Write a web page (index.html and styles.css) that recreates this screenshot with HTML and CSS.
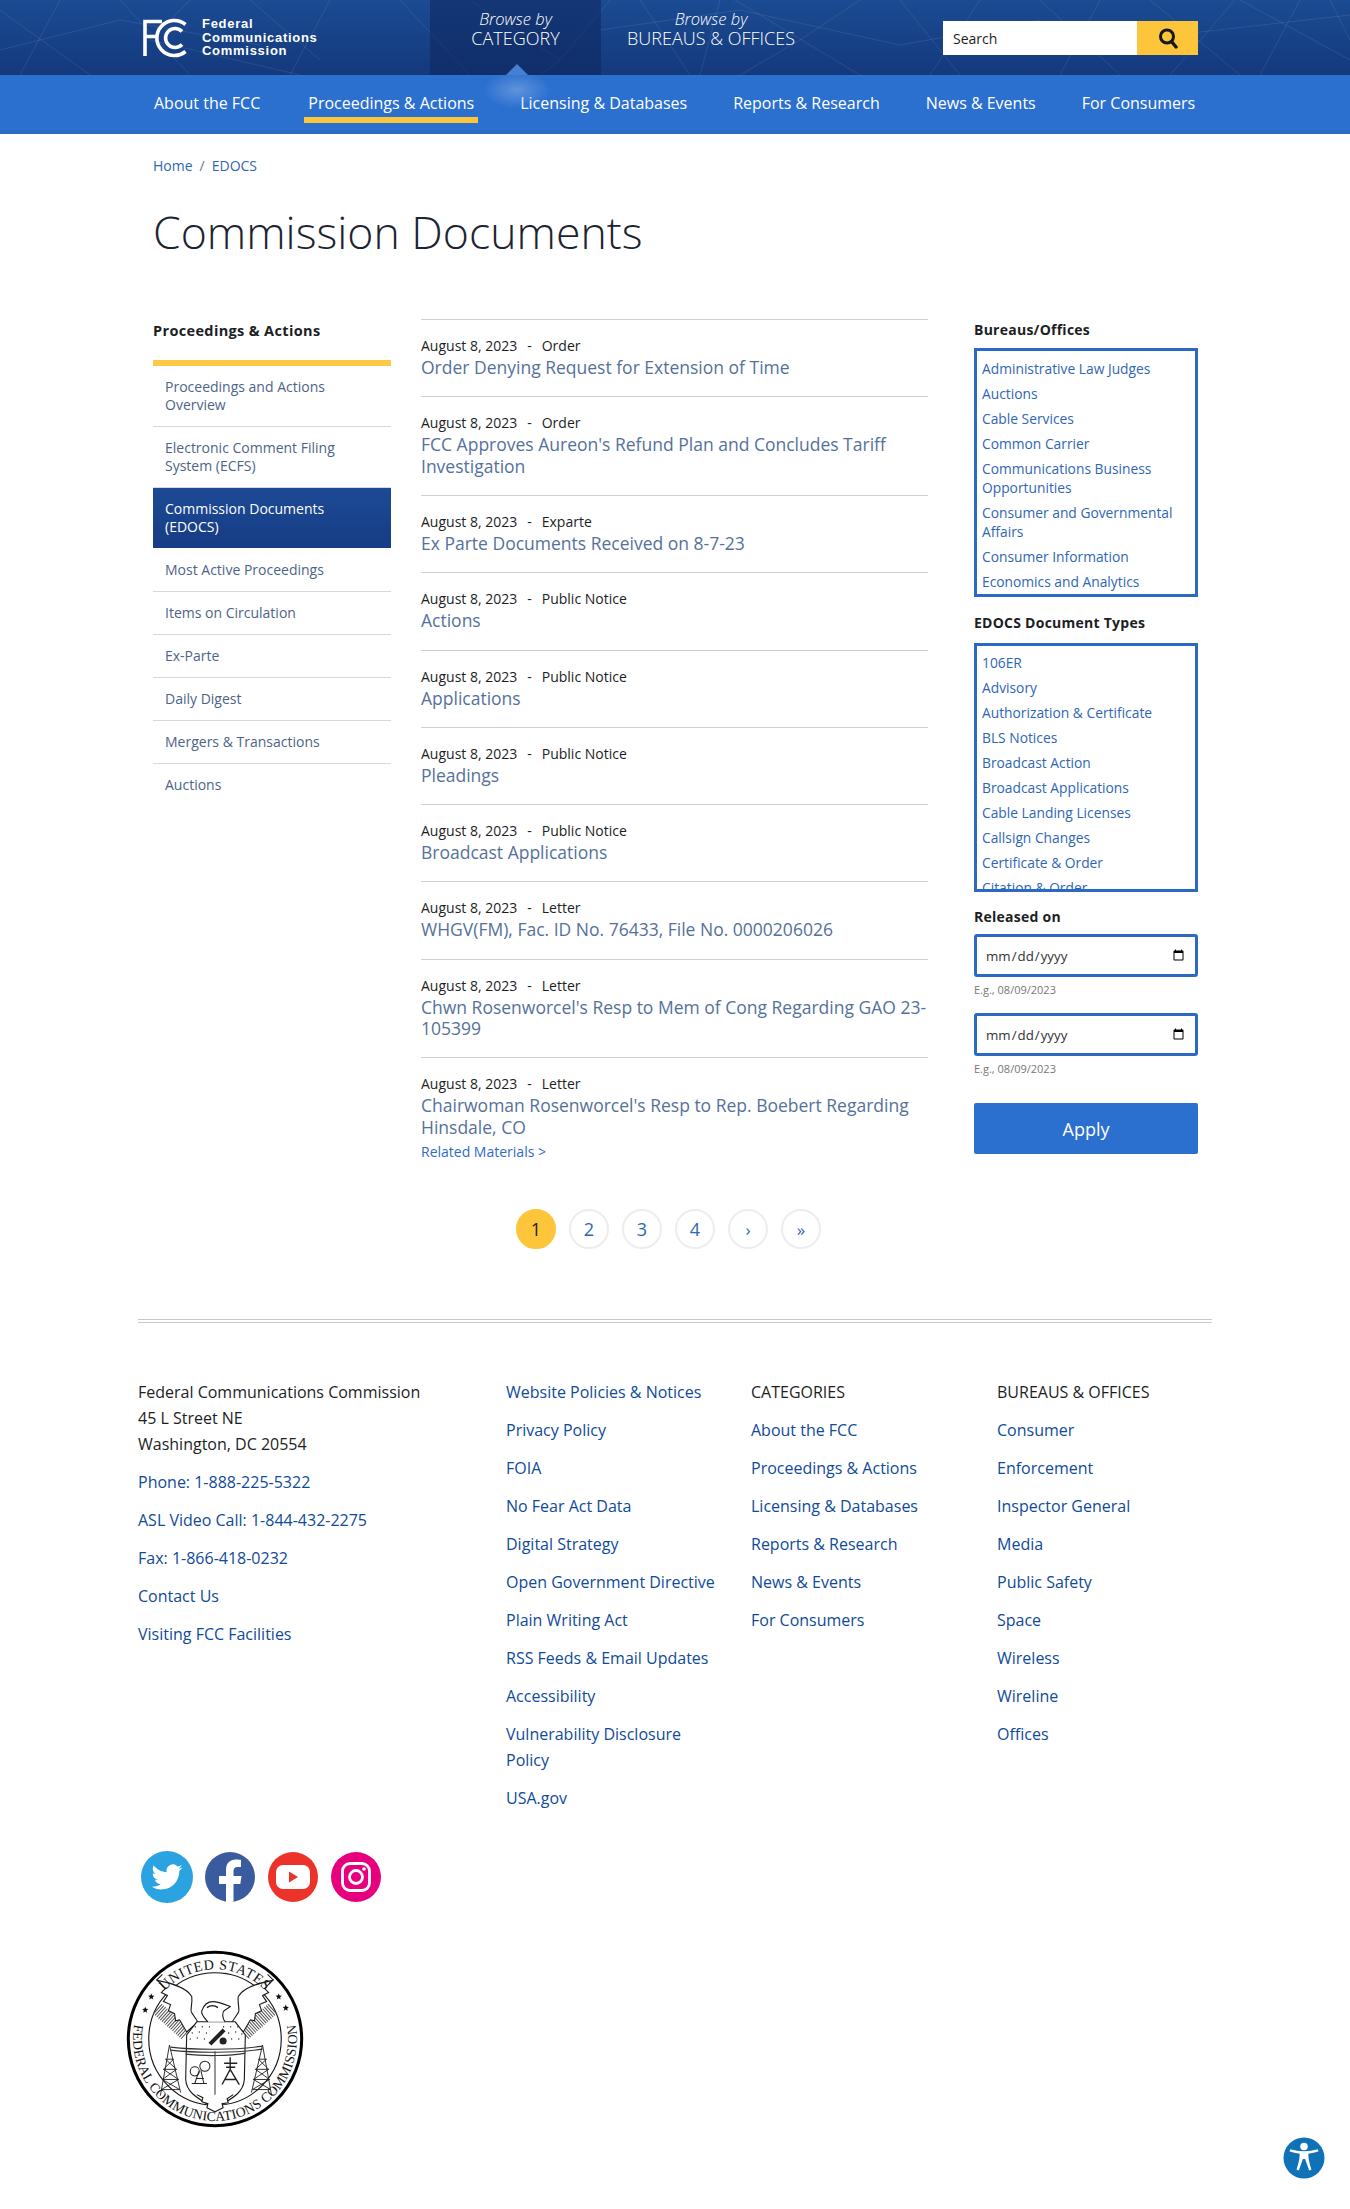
FILE: index.html
```html
<!doctype html>
<html lang="en">
<head>
    <meta charset="UTF-8">
    <title>Commission Documents | Federal Communications Commission</title>
    <link rel="stylesheet" href="styles.css">
</head>
<body>

<header class="masthead">
    <svg class="mast-lines" width="1350" height="75" viewBox="0 0 1350 75" aria-hidden="true">
        <path d="M0 10L90 75M60 0L20 75M120 0L190 75M190 0L150 40L300 75M250 0L320 60M330 0L290 75M400 0L470 75M470 0L560 60L610 0M560 60L540 75M640 0L690 75M720 0L700 75M735 0L860 75M860 0L800 40L740 75M900 0L960 75M980 0L930 75M1040 0L1120 75M1100 0L1060 75M1150 0L1240 75M1235 0L1170 75M1240 0L1350 60M1300 0L1260 75M1330 0L1350 40M0 50L120 20L260 45M600 30L740 10L900 45L1040 20M1130 40L1350 15"/>
    </svg>
    <div class="mast-inner">
        <a class="logo" href="#">
            <svg class="logo-mark" width="46" height="40" viewBox="0 0 46 40" aria-hidden="true">
                <g fill="none" stroke="#fff" stroke-width="3.600">
                    <path d="M3 38V3.500H20M3 18.500H16"/>
                    <path d="M43.500 6.500A17.500 17.500 0 1 0 43.500 33.500"/>
                    <path d="M40 13.500A9.500 9.500 0 1 0 40 26.500"/>
                </g>
            </svg>
            <span class="logo-text">Federal<br>Communications<br>Commission</span>
        </a>
        <a class="browse browse-on" href="#"><i>Browse by</i>CATEGORY</a>
        <a class="browse browse-bureaus" href="#"><i>Browse by</i>BUREAUS &amp; OFFICES</a>
        <form class="search">
            <input class="search-input" type="text" placeholder="Search">
            <button class="search-btn" type="button" aria-label="Search">
                <svg width="22" height="22" viewBox="0 0 22 22" aria-hidden="true">
                    <circle cx="10" cy="9.500" r="6.500" fill="none" stroke="#16181d" stroke-width="3"/>
                    <path d="M14.500 14.500L19 20" stroke="#16181d" stroke-width="3.400" stroke-linecap="round"/>
                </svg>
            </button>
        </form>
    </div>
</header>

<nav class="mainnav">
    <span class="nav-pointer"></span>
    <a href="#">About the FCC</a>
    <a class="on" href="#">Proceedings &amp; Actions</a>
    <a href="#">Licensing &amp; Databases</a>
    <a href="#">Reports &amp; Research</a>
    <a href="#">News &amp; Events</a>
    <a href="#">For Consumers</a>
</nav>

<main class="page">
    <div class="crumbs"><a href="#">Home</a><span>/</span><a href="#">EDOCS</a></div>
    <h1>Commission Documents</h1>

    <div class="columns">
        <aside class="sidenav">
            <h2>Proceedings &amp; Actions</h2>
            <ul>
                <li><a href="#">Proceedings and Actions Overview</a></li>
                <li><a href="#">Electronic Comment Filing System (ECFS)</a></li>
                <li class="active"><a href="#">Commission Documents (EDOCS)</a></li>
                <li><a href="#">Most Active Proceedings</a></li>
                <li><a href="#">Items on Circulation</a></li>
                <li><a href="#">Ex-Parte</a></li>
                <li><a href="#">Daily Digest</a></li>
                <li><a href="#">Mergers &amp; Transactions</a></li>
                <li><a href="#">Auctions</a></li>
            </ul>
        </aside>

        <section class="docs">
            <article class="doc">
                <div class="doc-meta">August 8, 2023<span>-</span>Order</div>
                <a class="doc-title" href="#">Order Denying Request for Extension of Time</a>
            </article>
            <article class="doc">
                <div class="doc-meta">August 8, 2023<span>-</span>Order</div>
                <a class="doc-title" href="#">FCC Approves Aureon's Refund Plan and Concludes Tariff Investigation</a>
            </article>
            <article class="doc">
                <div class="doc-meta">August 8, 2023<span>-</span>Exparte</div>
                <a class="doc-title" href="#">Ex Parte Documents Received on 8-7-23</a>
            </article>
            <article class="doc">
                <div class="doc-meta">August 8, 2023<span>-</span>Public Notice</div>
                <a class="doc-title" href="#">Actions</a>
            </article>
            <article class="doc">
                <div class="doc-meta">August 8, 2023<span>-</span>Public Notice</div>
                <a class="doc-title" href="#">Applications</a>
            </article>
            <article class="doc">
                <div class="doc-meta">August 8, 2023<span>-</span>Public Notice</div>
                <a class="doc-title" href="#">Pleadings</a>
            </article>
            <article class="doc">
                <div class="doc-meta">August 8, 2023<span>-</span>Public Notice</div>
                <a class="doc-title" href="#">Broadcast Applications</a>
            </article>
            <article class="doc">
                <div class="doc-meta">August 8, 2023<span>-</span>Letter</div>
                <a class="doc-title" href="#">WHGV(FM), Fac. ID No. 76433, File No. 0000206026</a>
            </article>
            <article class="doc">
                <div class="doc-meta">August 8, 2023<span>-</span>Letter</div>
                <a class="doc-title" href="#">Chwn Rosenworcel's Resp to Mem of Cong Regarding GAO 23-105399</a>
            </article>
            <article class="doc doc-last">
                <div class="doc-meta">August 8, 2023<span>-</span>Letter</div>
                <a class="doc-title" href="#">Chairwoman Rosenworcel's Resp to Rep. Boebert Regarding Hinsdale, CO</a>
                <a class="doc-related" href="#">Related Materials &gt;</a>
            </article>

            <div class="pager">
                <a class="current" href="#">1</a>
                <a href="#">2</a>
                <a href="#">3</a>
                <a href="#">4</a>
                <a class="small" href="#">›</a>
                <a class="small" href="#">»</a>
            </div>
        </section>

        <aside class="filters">
            <h3>Bureaus/Offices</h3>
            <ul class="pick">
                <li><a href="#">Administrative Law Judges</a></li>
                <li><a href="#">Auctions</a></li>
                <li><a href="#">Cable Services</a></li>
                <li><a href="#">Common Carrier</a></li>
                <li><a href="#">Communications Business Opportunities</a></li>
                <li><a href="#">Consumer and Governmental Affairs</a></li>
                <li><a href="#">Consumer Information</a></li>
                <li><a href="#">Economics and Analytics</a></li>
            </ul>
            <h3 class="second">EDOCS Document Types</h3>
            <ul class="pick pick-types">
                <li><a href="#">106ER</a></li>
                <li><a href="#">Advisory</a></li>
                <li><a href="#">Authorization &amp; Certificate</a></li>
                <li><a href="#">BLS Notices</a></li>
                <li><a href="#">Broadcast Action</a></li>
                <li><a href="#">Broadcast Applications</a></li>
                <li><a href="#">Cable Landing Licenses</a></li>
                <li><a href="#">Callsign Changes</a></li>
                <li><a href="#">Certificate &amp; Order</a></li>
                <li><a href="#">Citation &amp; Order</a></li>
            </ul>
            <h3 class="released">Released on</h3>
            <input class="date" type="date">
            <div class="hint">E.g., 08/09/2023</div>
            <input class="date" type="date">
            <div class="hint">E.g., 08/09/2023</div>
            <button class="apply" type="button">Apply</button>
        </aside>
    </div>
</main>

<footer class="footer">
    <div class="foot-cols">
        <div class="foot-col foot-contact">
            <p>Federal Communications Commission<br>45 L Street NE<br>Washington, DC 20554</p>
            <p><a href="#">Phone: 1-888-225-5322</a></p>
            <p><a href="#">ASL Video Call: 1-844-432-2275</a></p>
            <p><a href="#">Fax: 1-866-418-0232</a></p>
            <p><a href="#">Contact Us</a></p>
            <p><a href="#">Visiting FCC Facilities</a></p>
        </div>
        <div class="foot-col foot-policies">
            <p><a href="#">Website Policies &amp; Notices</a></p>
            <p><a href="#">Privacy Policy</a></p>
            <p><a href="#">FOIA</a></p>
            <p><a href="#">No Fear Act Data</a></p>
            <p><a href="#">Digital Strategy</a></p>
            <p><a href="#">Open Government Directive</a></p>
            <p><a href="#">Plain Writing Act</a></p>
            <p><a href="#">RSS Feeds &amp; Email Updates</a></p>
            <p><a href="#">Accessibility</a></p>
            <p><a href="#">Vulnerability Disclosure Policy</a></p>
            <p><a href="#">USA.gov</a></p>
        </div>
        <div class="foot-col">
            <p>CATEGORIES</p>
            <p><a href="#">About the FCC</a></p>
            <p><a href="#">Proceedings &amp; Actions</a></p>
            <p><a href="#">Licensing &amp; Databases</a></p>
            <p><a href="#">Reports &amp; Research</a></p>
            <p><a href="#">News &amp; Events</a></p>
            <p><a href="#">For Consumers</a></p>
        </div>
        <div class="foot-col">
            <p>BUREAUS &amp; OFFICES</p>
            <p><a href="#">Consumer</a></p>
            <p><a href="#">Enforcement</a></p>
            <p><a href="#">Inspector General</a></p>
            <p><a href="#">Media</a></p>
            <p><a href="#">Public Safety</a></p>
            <p><a href="#">Space</a></p>
            <p><a href="#">Wireless</a></p>
            <p><a href="#">Wireline</a></p>
            <p><a href="#">Offices</a></p>
        </div>
    </div>

    <div class="social">
        <a href="#" aria-label="Twitter">
            <svg width="52" height="52" viewBox="0 0 52 52">
                <circle cx="26" cy="26" r="26" fill="#2aa3e0"/>
                <g transform="translate(10.500 10.500) scale(1.290)">
                    <path fill="#fff" d="M23.953 4.570a10 10 0 01-2.825.775 4.958 4.958 0 002.163-2.723c-.951.555-2.005.959-3.127 1.184a4.920 4.920 0 00-8.384 4.482C7.690 8.095 4.067 6.130 1.640 3.162a4.822 4.822 0 00-.666 2.475c0 1.710.870 3.213 2.188 4.096a4.904 4.904 0 01-2.228-.616v.060a4.923 4.923 0 003.946 4.827 4.996 4.996 0 01-2.212.085 4.936 4.936 0 004.604 3.417 9.867 9.867 0 01-6.102 2.105c-.390 0-.779-.023-1.170-.067a13.995 13.995 0 007.557 2.209c9.053 0 13.998-7.496 13.998-13.985 0-.210 0-.420-.015-.630A9.935 9.935 0 0024 4.590z"/>
                </g>
            </svg>
        </a>
        <a href="#" aria-label="Facebook">
            <svg width="52" height="52" viewBox="0 0 52 52">
                <circle cx="26" cy="26" r="25" fill="#3b5b9f"/>
                <path fill="#fff" d="M22 51V33h-7v-8h7v-6c0-7 4-10.500 10-10.500 2.500 0 5 .4 5 .4v7h-3c-3.500 0-4.500 2-4.500 4.200V25h8l-1.200 8h-6.800v17.800c-2.500.6-5 .6-7.500.2z"/>
            </svg>
        </a>
        <a href="#" aria-label="YouTube">
            <svg width="52" height="52" viewBox="0 0 52 52">
                <circle cx="26" cy="26" r="25" fill="#ec3329"/>
                <rect x="9" y="14" width="34" height="24" rx="7" fill="#fff"/>
                <path fill="#ec3329" d="M22 20.500l9 5.500-9 5.500z"/>
            </svg>
        </a>
        <a href="#" aria-label="Instagram">
            <svg width="52" height="52" viewBox="0 0 52 52">
                <circle cx="26" cy="26" r="25" fill="#e6007e"/>
                <rect x="12.500" y="12.500" width="27" height="27" rx="7.500" fill="none" stroke="#fff" stroke-width="2.800"/>
                <circle cx="26" cy="26" r="6.500" fill="none" stroke="#fff" stroke-width="2.800"/>
                <circle cx="34" cy="18" r="1.800" fill="#fff"/>
            </svg>
        </a>
    </div>

    <svg class="seal" width="178" height="178" viewBox="0 0 176 176" role="img" aria-label="Seal of the Federal Communications Commission">
        <defs>
            <path id="seal-top" d="M23 65A69 69 0 0 1 153 65"/>
            <path id="seal-bot" d="M11.900 60.300A81 81 0 1 0 164.100 60.300"/>
            <g id="seal-wing">
                <path d="M31 58L60 84" fill="none" stroke="#555" stroke-width="13" stroke-dasharray="1 1.300"/>
                <path fill="#fff" stroke="#1a1a1a" stroke-width="1.100" d="M31 30C46 33 60 37 65 46C66 53 63 60 65 62L71 71L60 81L53 69L49 70L48 63L42 60L44 54L37 51L41 45L35 42L39 38z"/>
            </g>
            <g id="seal-tower" fill="none" stroke="#222" stroke-width=".9">
                <path d="M43 94L34 144M43 94L54 141M39 108H47M37 118H50M36 128H52M35 138H53M39 108L50 118M47 108L37 118M37 118L52 128M50 118L36 128M36 128L53 138M52 128L35 138"/>
            </g>
        </defs>
        <circle cx="88" cy="88" r="85.700" fill="#fff" stroke="#000" stroke-width="3"/>
        <circle cx="88" cy="88" r="65.500" fill="none" stroke="#111" stroke-width="1.100"/>
        <use href="#seal-wing"/>
        <use href="#seal-wing" transform="matrix(-1 0 0 1 176 0)"/>
        <path d="M30 30L36 24M146 30L140 24" stroke="#1a1a1a" stroke-width="1" fill="none"/>
        <use href="#seal-tower"/>
        <use href="#seal-tower" transform="matrix(-1 0 0 1 178 0)"/>
        <path d="M70 71H108L118 84L117 128C116 142 104 147 88 157C72 147 60 142 59 128L60 84z" fill="#fff" stroke="#1a1a1a" stroke-width="1.100"/>
        <path d="M81 71C77 67 74 63 75 60C77 54 81 51 86 51C92 51 98 54 103 56L97 60C95 62 95 67 98 71" fill="#fff" stroke="#1a1a1a" stroke-width="1.100"/>
        <path d="M80 57C84 54 88 55 91 57" fill="none" stroke="#1a1a1a" stroke-width="1.300"/>
        <path d="M68 76h1M75 76h1M82 76h1M96 76h1M103 76h1M110 76h1M65 82h1M72 81h1M79 82h1M101 82h1M108 81h1M114 83h1M63 88h1M70 87h1M77 88h1M104 88h1M111 88h1" stroke="#333" stroke-width="1.500" fill="none"/>
        <path d="M83 93L97 79" stroke="#222" stroke-width="4" fill="none"/>
        <circle cx="96" cy="90" r="3.500" fill="#222"/>
        <path d="M44 96C70 99 108 99 135 95M44 99C70 102 108 102 135 98M59 103C75 105 103 105 118 102" stroke="#333" stroke-width="1.100" fill="none"/>
        <path d="M88 100V150" stroke="#444" stroke-width="1.100" fill="none"/>
        <path d="M70 143L76 146L75 150L81 152L80 156L88 160L96 156L95 152L101 151L100 147L106 143" fill="#fff" stroke="#1a1a1a" stroke-width="1.100"/>
        <g fill="none" stroke="#222" stroke-width="1">
            <circle cx="68" cy="120" r="4.500"/>
            <circle cx="78" cy="115" r="5"/>
            <path d="M72 120L68 132M74 119L77 132M65 132H80M69 127H77"/>
            <path d="M103 106V120M97 112H110M99 116H108M95 133L103 118L112 133M98 128H109" stroke-width="1.400"/>
        </g>
        <path d="M25 43l.9 2.100 2.200.2-1.700 1.500.5 2.200-1.900-1.200-1.900 1.200.5-2.200-1.700-1.500 2.200-.2z M19 56l.9 2.100 2.200.2-1.700 1.500.5 2.200-1.900-1.200-1.900 1.200.5-2.200-1.700-1.500 2.200-.2z M151 43l.9 2.100 2.200.2-1.700 1.500.5 2.200-1.900-1.200-1.900 1.200.5-2.200-1.700-1.500 2.200-.2z M158 54l.9 2.100 2.200.2-1.700 1.500.5 2.200-1.900-1.200-1.900 1.200.5-2.200-1.700-1.500 2.200-.2z" fill="#111"/>
        <text class="seal-text seal-top"><textPath href="#seal-top" startOffset="50%" text-anchor="middle">UNITED STATES</textPath></text>
        <text class="seal-text seal-bot"><textPath href="#seal-bot" startOffset="50%" text-anchor="middle">FEDERAL COMMUNICATIONS COMMISSION</textPath></text>
    </svg>
</footer>

<a class="a11y" href="#" aria-label="Accessibility">
    <svg width="42" height="42" viewBox="0 0 42 42">
        <circle cx="21" cy="21" r="20.500" fill="#0f71b8"/>
        <circle cx="21" cy="9.500" r="3.800" fill="#fff"/>
        <path fill="#fff" d="M6.500 14.500l.8-2.200c4.500 1.300 9 2 13.700 2s9.200-.7 13.700-2l.8 2.200c-3.300 1.100-6.700 1.800-10.200 2.200.1 3.900.5 7.600 3.200 15.800l-2.300 1-4.100-11.500h-2.200l-4.100 11.500-2.300-1c2.700-8.200 3.100-11.900 3.200-15.800-3.500-.4-6.900-1.100-10.200-2.200z"/>
    </svg>
</a>

</body>
</html>
```

FILE: styles.css
```css
* {
    box-sizing: border-box;
}
html, body {
    margin: 0;
    padding: 0;
}
body {
    font-family: "Open Sans", "Liberation Sans", sans-serif;
    font-size: 14px;
    color: #1c1e24;
    background: #fff;
    height: 2209px;
    overflow: hidden;
}
a {
    text-decoration: none;
    color: inherit;
}
ul {
    list-style: none;
    margin: 0;
    padding: 0;
}

/* top band */
.masthead {
    position: relative;
    height: 75px;
    background: linear-gradient(#1b4b93, #14397c);
    overflow: hidden;
}
.mast-lines {
    position: absolute;
    left: 0;
    top: 0;
}
.mast-lines path {
    fill: none;
    stroke: rgba(255, 255, 255, .09);
    stroke-width: 1;
}
.mast-inner {
    position: relative;
    display: flex;
    height: 75px;
    padding-left: 142px;
}
.logo {
    display: flex;
    align-items: center;
    width: 288px;
    color: #fff;
}
.logo-text {
    margin-left: 14px;
    font-family: "Liberation Sans", Arial, sans-serif;
    font-weight: 700;
    font-size: 13px;
    line-height: 13.700px;
    letter-spacing: .72px;
}
.browse {
    display: flex;
    flex-direction: column;
    align-items: center;
    justify-content: flex-start;
    padding-top: 10px;
    color: #fff;
    font-size: 18px;
    font-weight: 300;
    line-height: 20px;
}
.browse i {
    font-size: 16.500px;
    line-height: 18px;
}
.browse-on {
    width: 171px;
    background: rgba(14, 39, 92, .55);
}
.browse-bureaus {
    width: 220px;
}
.search {
    display: flex;
    margin-left: 122px;
    margin-top: 21px;
    height: 34px;
    width: 255px;
}
.search-input {
    flex: 1;
    min-width: 0;
    border: 0;
    border-radius: 0;
    padding: 0 10px;
    font: 14px "Open Sans", sans-serif;
    background: #fff;
}
.search-input::placeholder {
    color: #1c1e24;
    opacity: 1;
}
.search-btn {
    width: 61px;
    border: 0;
    padding: 2px 0 0;
    background: #fdc53a;
}

/* main menu */
.mainnav {
    position: relative;
    display: flex;
    gap: 38px;
    height: 59px;
    padding: 0 0 0 150px;
    background: #2c70cf;
    border-bottom: 3px solid #2d6bc0;
}
.mainnav a {
    height: 49px;
    padding: 16px 4px 0;
    color: #fff;
    font-size: 16px;
    line-height: 24px;
    white-space: nowrap;
}
.mainnav a.on {
    margin-left: 2px;
    border-bottom: 6px solid #fdc53a;
    height: 48px;
}
.nav-pointer {
    position: absolute;
    left: 484px;
    top: -11px;
    width: 66px;
    height: 44px;
    background: radial-gradient(closest-side, rgba(130, 170, 230, .6), rgba(130, 170, 230, 0)) 0 8px / 66px 36px no-repeat;
    pointer-events: none;
}
.nav-pointer::before {
    content: "";
    position: absolute;
    left: 22px;
    top: 0;
    border-left: 11px solid transparent;
    border-right: 11px solid transparent;
    border-bottom: 11px solid #4680d4;
}

/* page head */
.page {
    padding: 22px 0 0 153px;
    width: 1350px;
}
.crumbs {
    font-size: 14px;
    line-height: 20px;
    color: #6a7488;
}
.crumbs a {
    color: #2f66b5;
}
.crumbs span {
    margin: 0 7px;
}
h1 {
    margin: 29px 0 60px;
    font-size: 44.600px;
    line-height: 54px;
    font-weight: 300;
    color: #1d2431;
}

.columns {
    display: flex;
    align-items: flex-start;
}

/* left menu */
.sidenav {
    width: 238px;
    margin-right: 30px;
    padding-top: 1px;
}
.sidenav h2 {
    margin: 0;
    height: 40px;
    font-size: 14.500px;
    line-height: 21px;
    font-weight: 700;
    letter-spacing: .35px;
}
.sidenav ul {
    border-top: 6px solid #fdc845;
}
.sidenav li {
    padding: 12px;
    line-height: 18px;
    color: #4d6488;
    border-bottom: 1px solid #d8d8d8;
}
.sidenav li:last-child {
    border-bottom: 0;
}
.sidenav li.active {
    background: linear-gradient(#1d4a95, #163c85);
    color: #fff;
    border-bottom: 0;
}
.sidenav li.active + li {
    padding-top: 13px;
}

/* documents */
.docs {
    width: 507px;
}
.doc {
    padding: 15px 0 17.750px;
    border-top: 1px solid #cfcfcf;
}
.doc-meta {
    font-size: 14px;
    line-height: 21px;
    color: #1c1e24;
}
.doc-meta span {
    margin: 0 10px;
}
.doc-title {
    display: block;
    margin-top: 1px;
    font-size: 17.500px;
    line-height: 21.500px;
    color: #55719b;
}
.doc-last {
    padding-bottom: 0;
}
.doc-related {
    display: block;
    margin-top: 3px;
    font-size: 14px;
    line-height: 21px;
    color: #2f6bc6;
}
.pager {
    display: flex;
    gap: 13px;
    margin: 47px 0 0 95px;
}
.pager a {
    width: 40px;
    height: 40px;
    border: 2px solid #ededed;
    border-radius: 50%;
    text-align: center;
    font-size: 18px;
    line-height: 37px;
    color: #2f66b9;
}
.pager a.small {
    font-size: 17px;
}
.pager a.current {
    background: #fdc53a;
    border-color: #fdc53a;
    color: #1c1e24;
}

/* filters */
.filters {
    width: 224px;
    margin-left: 46px;
}
.filters h3 {
    margin: 0 0 8px;
    font-size: 14px;
    line-height: 21px;
    font-weight: 700;
    letter-spacing: .25px;
}
.filters h3.second {
    margin: 15px 0 10px;
}
.filters h3.released {
    margin: 14px 0 7px;
}
.pick {
    height: 249px;
    padding: 8px 5px 0;
    border: 3px solid #2c69c2;
    overflow: hidden;
}
.pick-types {
    padding-top: 7px;
}
.pick li {
    margin-bottom: 6px;
    font-size: 13.800px;
    line-height: 19px;
    color: #2f66b5;
}
.date {
    display: block;
    width: 100%;
    height: 43px;
    padding: 0 8px 0 8px;
    border: 3px solid #2c69c2;
    border-radius: 3px;
    background: #fff;
    font: 13.300px "Open Sans", sans-serif;
    color: #333;
}
.hint {
    height: 36px;
    padding-top: 5px;
    font-size: 11px;
    line-height: 16px;
    color: #777;
}
.apply {
    display: block;
    width: 100%;
    height: 51px;
    margin-top: 11px;
    border: 0;
    border-radius: 2px;
    background: #2c70cf;
    color: #fff;
    font: 18px "Open Sans", sans-serif;
}

/* footer */
.footer {
    width: 1074px;
    margin: 70px 0 0 138px;
    border-top: 4px double #c8c8c8;
    padding-top: 56px;
    font-size: 16px;
}
.foot-cols {
    display: grid;
    grid-template-columns: 368px 245px 246px 215px;
}
.foot-col {
    padding-right: 20px;
    line-height: 26px;
}
.foot-policies {
    padding-right: 30px;
}
.foot-col p {
    margin: 0 0 12px;
}
.foot-col a {
    color: #104a9b;
}
.social {
    display: flex;
    gap: 11px;
    margin-top: 28px;
    margin-left: 3px;
}
.social a,
.social svg {
    display: block;
}
.seal {
    display: block;
    margin: 47px 0 0 -12px;
}
.seal-text {
    font-family: "Liberation Serif", serif;
    fill: #111;
}
.seal-top {
    font-size: 14px;
    letter-spacing: .6px;
}
.seal-bot {
    font-size: 13.500px;
    letter-spacing: .2px;
}
.a11y {
    position: fixed;
    right: 25px;
    bottom: 30px;
    line-height: 0;
}
```
